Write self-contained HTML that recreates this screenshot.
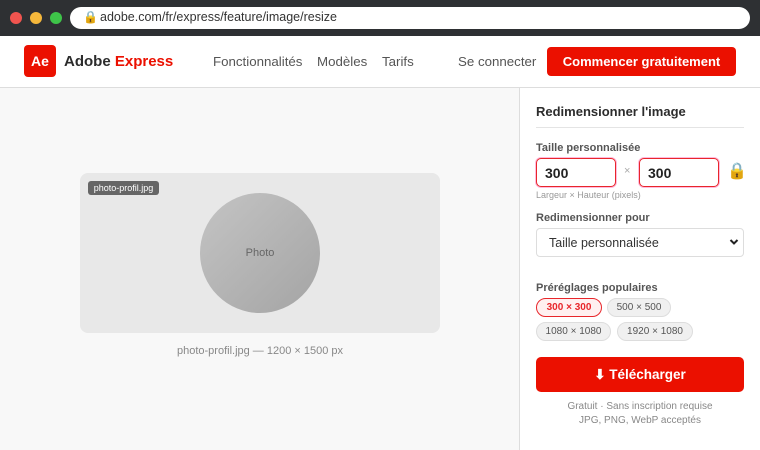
<!DOCTYPE html>
<html><head><meta charset="utf-8"><style>
*{box-sizing:border-box;margin:0;padding:0}
body{width:760px;height:450px;overflow:hidden;font-family:"Liberation Sans",sans-serif;background:#f8f8f8;position:relative}
.abs{position:absolute}
.bar{left:0;top:0;width:760px;height:36px;background:#2e3033}
.dot{width:12px;height:12px;border-radius:50%;top:12px}
.url{left:70px;top:7px;width:680px;height:22px;background:#fff;border-radius:11px;font-size:12.5px;color:#333;padding:3px 0 0 30px}
.hdr{left:0;top:36px;width:760px;height:52px;background:#fff;border-bottom:1px solid #ddd}
.nav{font-size:13.3px;color:#555;top:54px}
.panel{left:519px;top:88px;width:241px;height:362px;background:#fff;border-left:1px solid #ddd}
.lbl{font-size:11px;font-weight:bold;color:#555}
.inp{height:29px;border:1.5px solid #e8262b;border-radius:5px;font-size:14px;font-weight:bold;color:#222;padding:6px 0 0 8px;background:#fff;box-shadow:0 0 0 1px #fbd}
.chip{height:19px;border-radius:10px;border:1px solid #ddd;background:#f0f0f0;font-size:10px;color:#555;text-align:center;padding-top:3px}
</style></head><body>
<div class="abs bar"></div>
<div class="abs dot" style="left:10px;background:#f0544f"></div>
<div class="abs dot" style="left:30px;background:#f5b73b"></div>
<div class="abs dot" style="left:50px;background:#3ec449"></div>
<div class="abs url">adobe.com/fr/express/feature/image/resize</div>
<div class="abs" style="left:83px;top:10px;font-size:12px">🔒</div>
<div class="abs hdr"></div>
<div class="abs" style="left:24px;top:45px;width:32px;height:32px;background:#eb1000;border-radius:4px;color:#fff;font-weight:bold;font-size:14px;text-align:center;line-height:32px">Ae</div>
<div class="abs" style="left:64px;top:53px;font-size:15px;font-weight:bold;color:#2c2c2c">Adobe <span style="color:#eb1000">Express</span></div>
<div class="abs nav" style="left:213px">Fonctionnalités</div>
<div class="abs nav" style="left:317px">Modèles</div>
<div class="abs nav" style="left:382px">Tarifs</div>
<div class="abs nav" style="left:458px">Se connecter</div>
<div class="abs" style="left:547px;top:47px;width:189px;height:29px;background:#eb1000;border-radius:4px;color:#fff;font-weight:bold;font-size:13px;text-align:center;line-height:29px">Commencer gratuitement</div>

<div class="abs" style="left:80px;top:173px;width:360px;height:160px;background:#e8e8e8;border-radius:8px"></div>
<div class="abs" style="left:200px;top:193px;width:120px;height:120px;border-radius:50%;background:linear-gradient(135deg,#c4c4c4,#a4a4a4);color:#666;font-size:11px;text-align:center;line-height:120px">Photo</div>
<div class="abs" style="left:88px;top:181px;width:71px;height:14px;background:#666;border-radius:3px;color:#fff;font-size:9px;text-align:center;line-height:14px">photo-profil.jpg</div>
<div class="abs" style="left:80px;top:345px;width:360px;text-align:center;font-size:11px;color:#888">photo-profil.jpg — 1200 × 1500 px</div>

<div class="abs panel"></div>
<div class="abs" style="left:536px;top:104px;font-size:13px;font-weight:bold;color:#2c2c2c">Redimensionner l'image</div>
<div class="abs" style="left:536px;top:127px;width:208px;height:1px;background:#e4e4e4"></div>
<div class="abs lbl" style="left:536px;top:142px">Taille personnalisée</div>
<div class="abs inp" style="left:536px;top:158px;width:80px">300</div>
<div class="abs" style="left:624px;top:165px;font-size:11px;color:#aaa">×</div>
<div class="abs inp" style="left:639px;top:158px;width:80px">300</div>
<div class="abs" style="left:727px;top:161px;font-size:16px">🔒</div>
<div class="abs" style="left:536px;top:190px;font-size:9px;color:#999">Largeur × Hauteur (pixels)</div>
<div class="abs lbl" style="left:536px;top:212px">Redimensionner pour</div>
<div class="abs" style="left:536px;top:228px;width:208px;height:29px;border:1px solid #ddd;border-radius:4px;background:#fff;font-size:12.5px;color:#333;padding:7px 0 0 12px">Taille personnalisée</div>
<svg class="abs" style="left:729px;top:238px" width="10" height="8" viewBox="0 0 10 8"><path d="M1.5 2 L5 5.5 L8.5 2" stroke="#222" stroke-width="2" fill="none"/></svg>
<div class="abs lbl" style="left:536px;top:282px">Préréglages populaires</div>
<div class="abs chip" style="left:536px;top:298px;width:66px;border-color:#e8262b;background:#fff0f0;color:#e8262b;font-weight:bold">300 × 300</div>
<div class="abs chip" style="left:607px;top:298px;width:64px">500 × 500</div>
<div class="abs chip" style="left:536px;top:322px;width:75px">1080 × 1080</div>
<div class="abs chip" style="left:617px;top:322px;width:76px">1920 × 1080</div>
<div class="abs" style="left:536px;top:357px;width:208px;height:35px;background:#eb1000;border-radius:5px;color:#fff;font-weight:bold;font-size:13.5px;text-align:center;line-height:35px">⬇ Télécharger</div>
<div class="abs" style="left:536px;top:400px;width:208px;text-align:center;font-size:10px;color:#888;line-height:14px">Gratuit · Sans inscription requise<br>JPG, PNG, WebP acceptés</div>
</body></html>
